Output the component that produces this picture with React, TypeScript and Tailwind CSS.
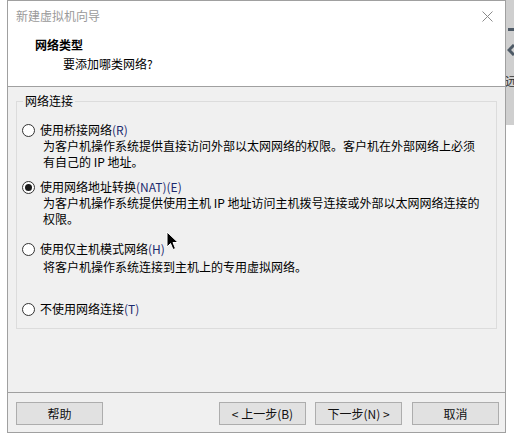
import React from "react";

const font = "font-['Noto_Sans_CJK_SC','Noto_Sans',sans-serif]";

function Radio({ checked }: { checked?: boolean }) {
  return (
    <span className="w-[13px] h-[13px] rounded-full border border-[#333] bg-white flex items-center justify-center shrink-0">
      {checked && <span className="w-[7px] h-[7px] rounded-full bg-[#1a1a1a]" />}
    </span>
  );
}

function Btn({ children }: { children: React.ReactNode }) {
  return (
    <button className="w-[87px] h-[23px] border border-[#adadad] bg-[#e1e1e1] text-[12px] leading-none text-[#111] flex items-center justify-center">
      {children}
    </button>
  );
}

function Key({ children }: { children: React.ReactNode }) {
  return <span className="text-[#1c2a6e]">{children}</span>;
}

export default function App() {
  return (
    <div className={`w-[514px] h-[441px] bg-white flex relative overflow-hidden ${font}`}>
      <div className="w-[7px] shrink-0" />
      {/* dialog */}
      <div className="w-[499px] h-[433px] border border-[#a0a0a0] flex flex-col shrink-0">
        <div className="bg-white h-[86px] border-b border-[#a0a0a0] flex flex-col">
          <div className="h-[30px] flex items-center justify-between pl-[8px] pr-[10px]">
            <span className="text-[12px] text-[#9a9a9a]">新建虚拟机向导</span>
            <svg width="11" height="11" viewBox="0 0 11 11" className="mr-[2px]">
              <path d="M0.5 0.5L10.5 10.5M10.5 0.5L0.5 10.5" stroke="#8a8a8a" strokeWidth="1" />
            </svg>
          </div>
          <div className="pl-[27px] pt-[5px] text-[12px] leading-[17px] font-bold text-black">网络类型</div>
          <div className="pl-[55px] pt-[3px] text-[12px] leading-[16px] text-black">要添加哪类网络?</div>
        </div>

        <div className="flex-1 bg-[#f0f0f0] flex flex-col">
          <fieldset className="mx-[8px] mt-[6px] h-[236px] border border-[#dcdcdc] px-[5px] text-[12px] leading-[16px] text-black">
            <legend className="ml-[1px] px-[2px]">网络连接</legend>
            <div className="pt-[13px] flex items-center gap-[5px]">
              <Radio />
              <span>使用桥接网络<Key>(R)</Key></span>
            </div>
            <div className="pl-[21px]">
              为客户机操作系统提供直接访问外部以太网网络的权限。客户机在外部网络上必须
              <br />
              有自己的 IP 地址。
            </div>
            <div className="mt-[9px] flex items-center gap-[5px]">
              <Radio checked />
              <span>使用网络地址转换<Key>(NAT)(E)</Key></span>
            </div>
            <div className="pl-[21px]">
              为客户机操作系统提供使用主机 IP 地址访问主机拨号连接或外部以太网网络连接的
              <br />
              权限。
            </div>
            <div className="mt-[14px] flex items-center gap-[5px]">
              <Radio />
              <span>使用仅主机模式网络<Key>(H)</Key></span>
            </div>
            <div className="pl-[21px] mt-[2px]">将客户机操作系统连接到主机上的专用虚拟网络。</div>
            <div className="mt-[26px] flex items-center gap-[5px]">
              <Radio />
              <span>不使用网络连接<Key>(T)</Key></span>
            </div>
          </fieldset>
          <div className="flex-1" />
          <div className="border-t border-[#a0a0a0] pt-[9px] pb-[7px] pl-[8px] pr-[6px] flex items-center">
            <Btn>帮助</Btn>
            <div className="flex-1" />
            <div className="flex gap-[9px]">
              <Btn>&lt; 上一步(B)</Btn>
              <Btn>下一步(N) &gt;</Btn>
            </div>
            <div className="w-[10px]" />
            <Btn>取消</Btn>
          </div>
        </div>
      </div>

      {/* edge of window behind */}
      <div className="flex-1 h-[125px] bg-[#cfcfcf] flex flex-col items-start pt-[28px] overflow-hidden">
        <div className="w-[6px] h-[3px] bg-[#4e5a66] ml-[2px]" />
        <svg width="8" height="12" viewBox="0 0 8 12" className="mt-[13px] ml-[1px]">
          <path d="M7 1L2 6L7 11" stroke="#4e5a66" strokeWidth="3" fill="none" />
        </svg>
        <span className="mt-[18px] text-[12px] leading-[14px] text-[#333] -ml-[1px]">远</span>
      </div>

      {/* mouse pointer */}
      <svg width="13" height="20" viewBox="0 0 13 20" className="absolute left-[166px] top-[231px]">
        <path d="M1 1L1 16L4.5 12.5L7 18.5L9.5 17.5L7 11.5L12 11.5Z" fill="#000" stroke="#fff" strokeWidth="1" />
      </svg>
    </div>
  );
}
